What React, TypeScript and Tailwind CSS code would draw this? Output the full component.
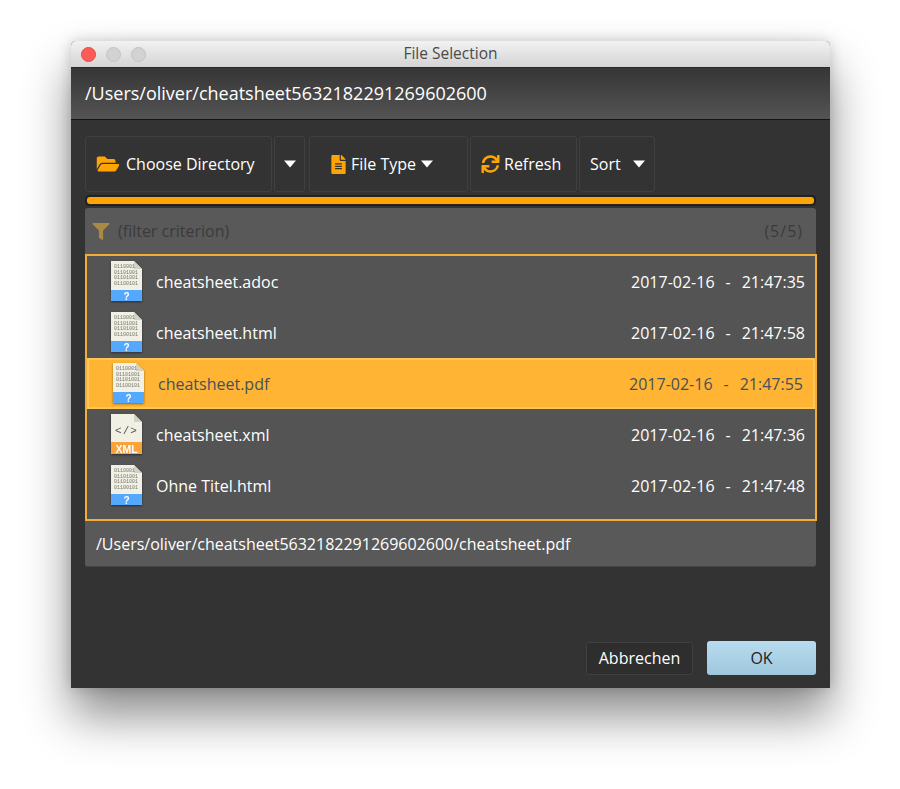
import { FaFilter, FaFolderOpen, FaFileAlt, FaSync } from "react-icons/fa";

const FONT = "font-['Open_Sans','Noto_Sans',sans-serif]";

const files = [
  { name: "cheatsheet.adoc", date: "2017-02-16", time: "21:47:35", kind: "bin" },
  { name: "cheatsheet.html", date: "2017-02-16", time: "21:47:58", kind: "bin" },
  { name: "cheatsheet.pdf", date: "2017-02-16", time: "21:47:55", kind: "bin", selected: true },
  { name: "cheatsheet.xml", date: "2017-02-16", time: "21:47:36", kind: "xml" },
  { name: "Ohne Titel.html", date: "2017-02-16", time: "21:47:48", kind: "bin" },
];

function Caret() {
  return (
    <svg width="12" height="8" viewBox="0 0 12 8" className="shrink-0">
      <path d="M0 0.5h12L6 7.5z" fill="#fff" />
    </svg>
  );
}

function FileIcon({ kind }: { kind: string }) {
  const xml = kind === "xml";
  return (
    <svg width="33" height="43" viewBox="0 0 33 43" className="shrink-0 drop-shadow-[0_1px_1px_rgba(0,0,0,0.45)]">
      <path d="M1 1h23l8 8v31a1 1 0 0 1-1 1H2a1 1 0 0 1-1-1z" fill="#f1f0e4" />
      <path d="M24 1l8 8h-8z" fill="#d3d2c6" />
      {xml ? (
        <>
          <path d="M1 29h31v11a1 1 0 0 1-1 1H2a1 1 0 0 1-1-1z" fill="#f9a33a" />
          <text x="16.5" y="39.5" textAnchor="middle" fontSize="10.5" fontWeight="700" fill="#fff" fontFamily="'Liberation Sans', sans-serif">XML</text>
          <text x="16.5" y="21" textAnchor="middle" fontSize="11" fill="#55554f" letterSpacing="1" fontFamily="'Liberation Mono', monospace">{"</>"}</text>
        </>
      ) : (
        <>
          <path d="M1 30h31v10a1 1 0 0 1-1 1H2a1 1 0 0 1-1-1z" fill="#54a9ff" />
          <text x="16.5" y="39.5" textAnchor="middle" fontSize="10" fontWeight="700" fill="#fff" fontFamily="'Liberation Sans', sans-serif">?</text>
          {["0110001", "0110100", "0110100", "0110010"].map((b, i) => (
            <text key={i} x="4" y={8 + i * 5.6} fontSize="5" fill="#77776f" fontFamily="'Liberation Mono', monospace">
              {b + (i === 0 ? "" : "1")}
            </text>
          ))}
        </>
      )}
    </svg>
  );
}

function ToolButton({ children, className }: { children: React.ReactNode; className: string }) {
  return (
    <div className={`flex h-[56px] items-center rounded-[3px] border border-[#404040] bg-[#333333] text-white ${className}`}>
      {children}
    </div>
  );
}

export default function App() {
  return (
    <div className={`h-[789px] w-[900px] overflow-hidden bg-white pl-[71px] pt-[41px] text-[16px] ${FONT}`}>
      <div className="flex h-[647px] w-[759px] flex-col rounded-t-[5px] bg-[#333333] shadow-[0_28px_48px_rgba(0,0,0,0.45),0_0_14px_rgba(0,0,0,0.18)]">
        {/* title bar */}
        <div className="relative flex h-[27px] shrink-0 items-center justify-center rounded-t-[5px] border-b border-[#2a2a2a] bg-gradient-to-b from-[#f2f2f2] to-[#d4d4d4]">
          <div className="absolute left-[10px] top-[6px] flex gap-[10px]">
            <span className="h-[15px] w-[15px] rounded-full border border-[#e24b41] bg-[#fc5b57]" />
            <span className="h-[15px] w-[15px] rounded-full border border-[#c4c4c4] bg-[#d2d2d2]" />
            <span className="h-[15px] w-[15px] rounded-full border border-[#c4c4c4] bg-[#d2d2d2]" />
          </div>
          <span className="text-[15.5px] text-[#4a4a4a]">File Selection</span>
        </div>

        {/* current directory */}
        <div className="flex h-[52px] shrink-0 items-center border-b border-[#141414] bg-gradient-to-b from-[#363636] to-[#545454] pl-[14px] text-[18px] text-white">
          /Users/oliver/cheatsheet5632182291269602600
        </div>

        <div className="flex flex-1 flex-col px-[14px] pt-[16px]">
          {/* toolbar */}
          <div className="flex gap-[2px]">
            <ToolButton className="w-[187px] gap-[5px] pl-[9px]">
              <FaFolderOpen className="h-[20px] w-[26px] text-[#ffa405]" />
              <span>Choose Directory</span>
            </ToolButton>
            <ToolButton className="w-[31px] justify-center">
              <Caret />
            </ToolButton>
            <ToolButton className="ml-[2px] w-[159px] gap-[5px] pl-[21px]">
              <FaFileAlt className="h-[19px] w-[15px] text-[#ffa405]" />
              <span>File Type</span>
              <Caret />
            </ToolButton>
            <ToolButton className="w-[107px] gap-[4px] pl-[10px]">
              <FaSync className="h-[18px] w-[19px] text-[#ffa405]" />
              <span>Refresh</span>
            </ToolButton>
            <ToolButton className="w-[76px] gap-[12px] pl-[10px]">
              <span>Sort</span>
              <Caret />
            </ToolButton>
          </div>

          {/* progress */}
          <div className="mt-[3px] h-[11px] rounded-[4px] border border-[#1f1f1f] bg-[#262626] p-[1px]">
            <div className="h-full rounded-[3px] bg-[#ffa405]" />
          </div>

          {/* filter */}
          <div className="mt-[2px] flex h-[46px] items-center rounded-t-[3px] bg-[#595959] pl-[7px] pr-[13px] text-[#3b3b3b]">
            <FaFilter className="h-[17px] w-[18px] text-[#a98a45]" />
            <span className="ml-[8px] flex-1">(filter criterion)</span>
            <span className="tracking-[1px]">(5/5)</span>
          </div>

          {/* file list */}
          <div className="-mr-px h-[267px] border-2 border-[#f2ad38] bg-[#545454]">
            {files.map((f) => (
              <div
                key={f.name}
                className={`flex h-[51px] items-center pl-[23px] pr-[10px] ${f.selected ? "border-2 border-[#ffc555] bg-[#ffb533] text-[#45505c]" : "text-white"}`}
              >
                <FileIcon kind={f.kind} />
                <span className="ml-[13px] flex-1">{f.name}</span>
                <span>{f.date}</span>
                <span className="mx-[11px]">-</span>
                <span>{f.time}</span>
              </div>
            ))}
          </div>

          {/* selected path */}
          <div className="flex h-[46px] items-center rounded-b-[3px] border-b border-[#464646] bg-[#595959] pl-[11px] text-white">
            /Users/oliver/cheatsheet5632182291269602600/cheatsheet.pdf
          </div>

          {/* actions */}
          <div className="mt-[74px] flex items-center justify-end gap-[14px]">
            <div className="flex h-[33px] w-[107px] items-center justify-center rounded-[3px] border border-[#404040] bg-[#2e2e2e] text-white">
              Abbrechen
            </div>
            <div className="flex h-[34px] w-[109px] items-center justify-center rounded-[3px] bg-gradient-to-b from-[#b8dcef] to-[#9fc7dc] text-[#222222]">
              OK
            </div>
          </div>
        </div>
      </div>
    </div>
  );
}
